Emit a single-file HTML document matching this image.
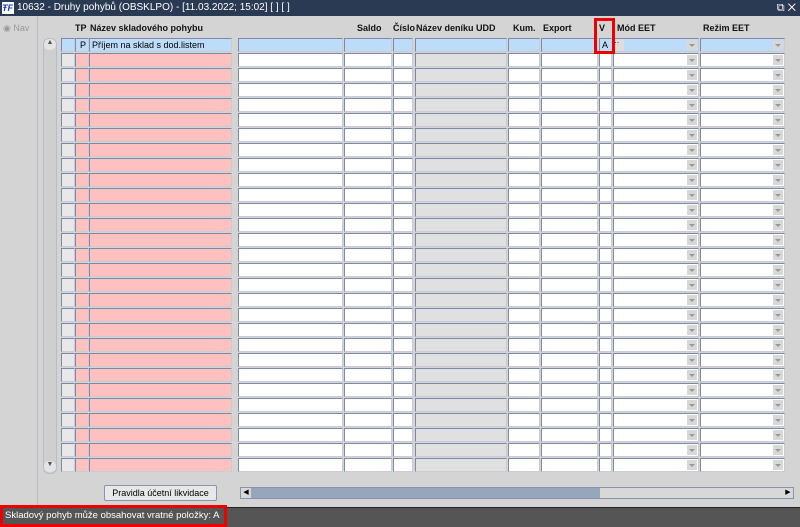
<!DOCTYPE html>
<html><head><meta charset="utf-8"><style>
*{box-sizing:border-box;margin:0;padding:0}
body{width:800px;height:527px;overflow:hidden;background:#d4d4d4;font-family:"Liberation Sans",sans-serif;font-size:9px;position:relative}
.abs{position:absolute}
#title{left:0;top:0;width:800px;height:16px;background:#2a3a52;color:#fff;font-size:10px;line-height:16px;padding-left:17px;white-space:nowrap}
#nav{left:0;top:16px;width:38px;height:490px;background:#d4d4d4;border-right:1px solid #b8bcc4}
.c{position:absolute;height:14px;border:1px solid #7d8aa6;border-right-color:#c8ccd4;border-bottom-color:#c8ccd4}
.h{position:absolute;top:23px;font-weight:bold;font-size:9px;color:#111}
.arr{position:absolute;right:1px;top:1px;width:10px;height:10px;background:#d8d8d8}
.arr:after{content:"";position:absolute;left:2px;top:4px;border-left:3px solid transparent;border-right:3px solid transparent;border-top:3px solid #999}
</style></head><body>
<div id="title" class="abs"><span style="position:absolute;left:2px;top:2px;width:12px;height:12px;background:#fff;color:#1a3ac0;font-size:9px;line-height:12px;font-weight:bold;font-style:italic">ŦF</span>10632 - Druhy pohybů (OBSKLPO) - [11.03.2022; 15:02] [ ] [ ]<span style="position:absolute;right:4px;top:0;font-size:11px">⧉ ✕</span></div>
<div id="nav" class="abs"><span style="position:absolute;left:3px;top:7px;color:#999;font-size:9px">◉ Nav</span></div>
<div class="h" style="left:75px">TP</div>
<div class="h" style="left:90px">Název skladového pohybu</div>
<div class="h" style="left:357px">Saldo</div>
<div class="h" style="left:393px">Číslo</div>
<div class="h" style="left:416px">Název deníku UDD</div>
<div class="h" style="left:513px">Kum.</div>
<div class="h" style="left:543px">Export</div>
<div class="h" style="left:599px">V</div>
<div class="h" style="left:617px">Mód EET</div>
<div class="h" style="left:703px">Režim EET</div>
<div class="abs" style="left:43px;top:38px;width:14px;height:436px;background:#cfcfcf;border:1px solid #b8bcc4;border-radius:6px"></div>
<div class="abs" style="left:44px;top:39px;width:12px;height:11px;background:#e4e4e4;border-radius:5px;font-size:7px;text-align:center;color:#555">▲</div>
<div class="abs" style="left:44px;top:461px;width:12px;height:11px;background:#e4e4e4;border-radius:5px;font-size:7px;text-align:center;color:#555">▼</div>
<div id="rows"></div>
<div class="abs" style="left:104px;top:485px;width:113px;height:16px;background:#e8e8e8;border:1px solid #8a94a8;border-radius:2px;text-align:center;line-height:14px;font-size:9px">Pravidla účetní likvidace</div>
<div class="abs" style="left:240px;top:487px;width:554px;height:12px;background:#96a6bb;border:1px solid #8a94a8"></div>
<div class="abs" style="left:600px;top:488px;width:193px;height:10px;background:#d8d8d8"></div>
<div class="abs" style="left:241px;top:488px;width:10px;height:10px;background:#d8d8d8;font-size:7px;line-height:10px;text-align:center">◀</div>
<div class="abs" style="left:783px;top:488px;width:10px;height:10px;background:#d8d8d8;font-size:7px;line-height:10px;text-align:center">▶</div>
<div class="abs" style="left:0;top:507px;width:800px;height:20px;background:#555;border-top:1px solid #222"></div>
<div class="abs" style="left:0;top:505px;width:227px;height:22px;border:3px solid #e00;color:#fff;font-size:9.5px;line-height:16px;padding-left:2px;background:#555;white-space:nowrap;overflow:hidden">Skladový pohyb může obsahovat vratné položky: A</div>
<div class="abs" style="left:594px;top:18px;width:21px;height:36px;border:3px solid #e00"></div>
<script>
var cols=[[61,14,'s'],[75,14,'p'],[89,143,'p'],[238,105,'w'],[344,48,'w'],[393,20,'w'],[415,92,'g'],[508,32,'w'],[541,57,'w'],[599,13,'w'],[613,86,'w',1],[700,85,'w',1]];
var h='';
for(var r=0;r<29;r++){var y=38+r*15;
cols.forEach(function(c){var bg=r==0?'#bcdcfa':(c[2]=='s'?'#e8e8e8':c[2]=='p'?'#ffc0c0':c[2]=='g'?'#e0e0e0':'#fff');
var t='';if(r==0&&c[0]==75)t='<span style="position:absolute;right:2px;top:1px">P</span>';
if(r==0&&c[0]==89)t='<span style="position:absolute;left:2px;top:1px">Příjem na sklad s dod.listem</span>';
if(r==0&&c[0]==599)t='<span style="position:absolute;left:2px;top:1px">A</span>';
if(c[3])t+='<div class="arr"></div>';
if(r==0&&c[0]==613)t+='<span style="position:absolute;left:0;top:0;width:10px;height:12px;background:#ddd;font-size:8px;line-height:8px">··</span>';
h+='<div class="c" style="left:'+c[0]+'px;top:'+y+'px;width:'+c[1]+'px;background:'+bg+'">'+t+'</div>';});}
document.getElementById('rows').innerHTML=h;
</script>
</body></html>
